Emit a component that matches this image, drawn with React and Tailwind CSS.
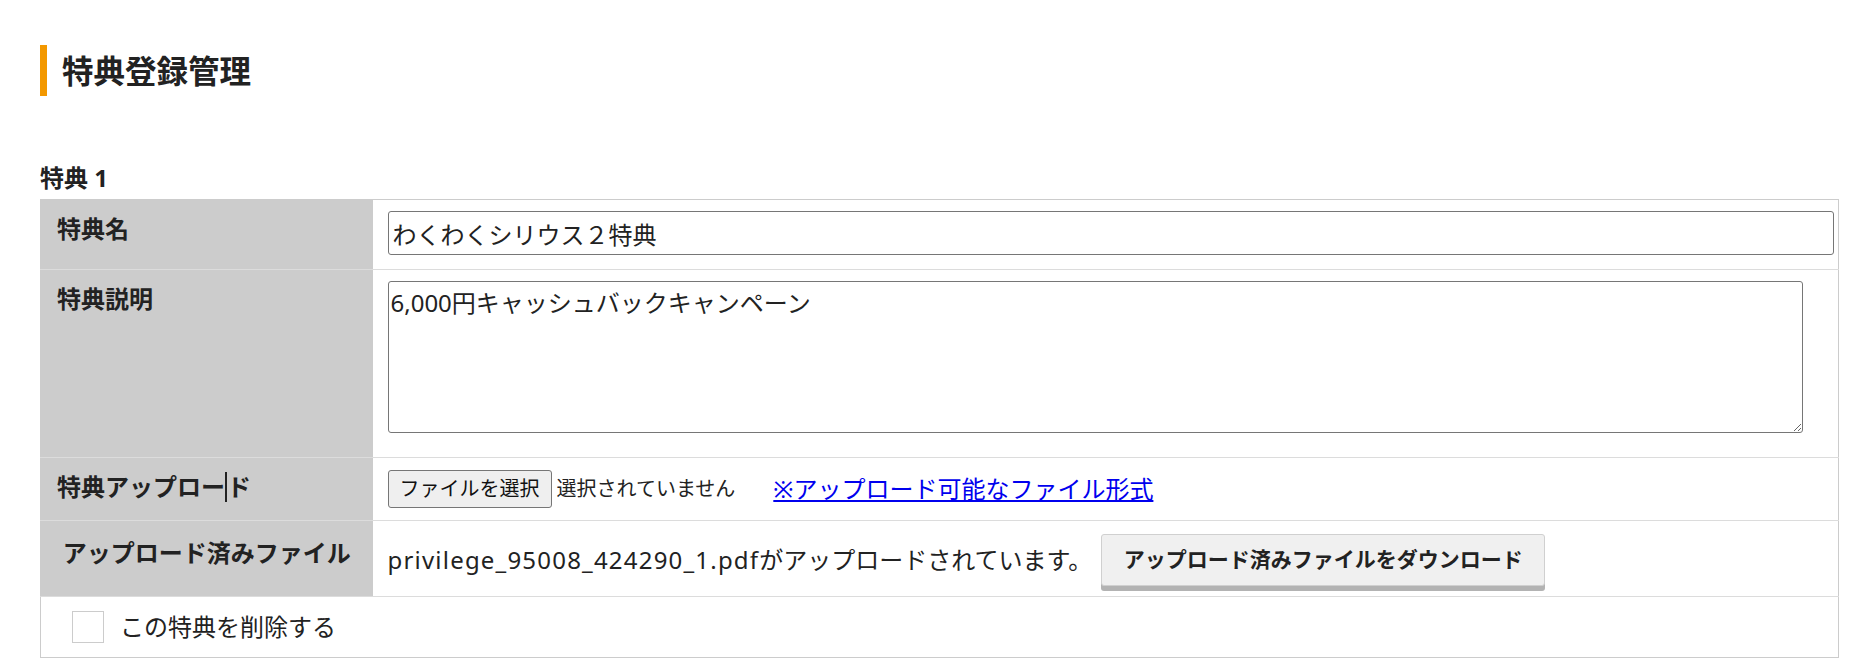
export default function App() {
  const font = { fontFamily: '"Noto Sans", "Noto Sans CJK JP", sans-serif' }

  return (
    <div className="min-h-screen bg-white text-[#222] pl-[40px] pr-[24px]" style={font}>
      {/* 見出し */}
      <div className="pt-[45px]">
        <h1 className="border-l-[7px] border-[#f39800] pl-[15px] h-[51px] flex items-center text-[31.5px] font-bold leading-none">
          特典登録管理
        </h1>
      </div>

      <h2 className="mt-[64px] mb-[3px] text-[24px] font-bold leading-[36px]">特典 1</h2>

      <table className="w-full border-collapse border border-[#cccccc] text-[24px]">
        <tbody>
          {/* 特典名 */}
          <tr className="h-[70px]">
            <th className="w-[332px] bg-[#cccccc] align-top text-left font-bold pl-[16px] pt-[11px] leading-[36px]">
              特典名
            </th>
            <td className="align-top pl-[15px] pr-[4px] pt-[11px] border-b border-[#dcdcdc]">
              <input
                type="text"
                defaultValue="わくわくシリウス２特典"
                className="w-full h-[44px] border border-[#767676] rounded-[3px] px-[4px] text-[24px] text-[#222] outline-none"
                style={font}
              />
            </td>
          </tr>

          {/* 特典説明 */}
          <tr className="border-t border-[#dcdcdc]">
            <th className="bg-[#cccccc] align-top text-left font-bold pl-[16px] pt-[11px] leading-[36px]">
              特典説明
            </th>
            <td className="align-top pl-[15px] pt-[11px] pb-[24px]">
              <textarea
                defaultValue="6,000円キャッシュバックキャンペーン"
                className="block w-[1415px] h-[152px] border border-[#767676] rounded-[3px] px-[2px] pt-[3px] text-[24px] leading-[36px] text-[#222] outline-none"
                style={font}
              />
            </td>
          </tr>

          {/* 特典アップロード */}
          <tr className="h-[63px] border-t border-[#dcdcdc]">
            <th className="bg-[#cccccc] align-top text-left font-bold pl-[16px] pt-[11px] leading-[36px]">
              特典アップロー
              <span className="inline-block w-[2px] h-[30px] bg-[#222] align-middle -mt-[4px]"></span>
              ド
            </th>
            <td className="align-top pl-[15px] pt-[12px]">
              <div className="flex items-center">
                <button className="h-[38px] w-[164px] bg-[#efefef] border border-[#767676] rounded-[3px] text-[20px] leading-none text-[#111]">
                  ファイルを選択
                </button>
                <span className="ml-[5px] text-[20px]">選択されていません</span>
                <a href="#" className="ml-[38px] text-[#0000ee] underline">
                  ※アップロード可能なファイル形式
                </a>
              </div>
            </td>
          </tr>

          {/* アップロード済みファイル */}
          <tr className="h-[76px] border-t border-[#dcdcdc]">
            <th className="bg-[#cccccc] align-top text-center font-bold pt-[14px] leading-[36px]">
              アップロード済みファイル
            </th>
            <td className="align-top pl-[15px] pt-[13px]">
              <div className="flex items-center">
                <span>
                  <span className="tracking-[1.2px]">privilege_95008_424290_1.pdf</span>
                  がアップロードされています。
                </span>
                <button className="ml-[9px] w-[444px] h-[52px] bg-[#f0f0f0] border border-[#d0d0d0] rounded-[3px] shadow-[0_5px_0_#b3b3b3] text-[21px] font-bold text-[#222]">
                  アップロード済みファイルをダウンロード
                </button>
              </div>
            </td>
          </tr>

          {/* 削除 */}
          <tr className="h-[61px] border-t border-[#dcdcdc]">
            <td colSpan={2} className="pl-[31px]">
              <label className="flex items-center gap-[16px]">
                <span className="w-[32px] h-[32px] border border-[#cccccc] bg-white"></span>
                <span>この特典を削除する</span>
              </label>
            </td>
          </tr>
        </tbody>
      </table>
    </div>
  )
}
